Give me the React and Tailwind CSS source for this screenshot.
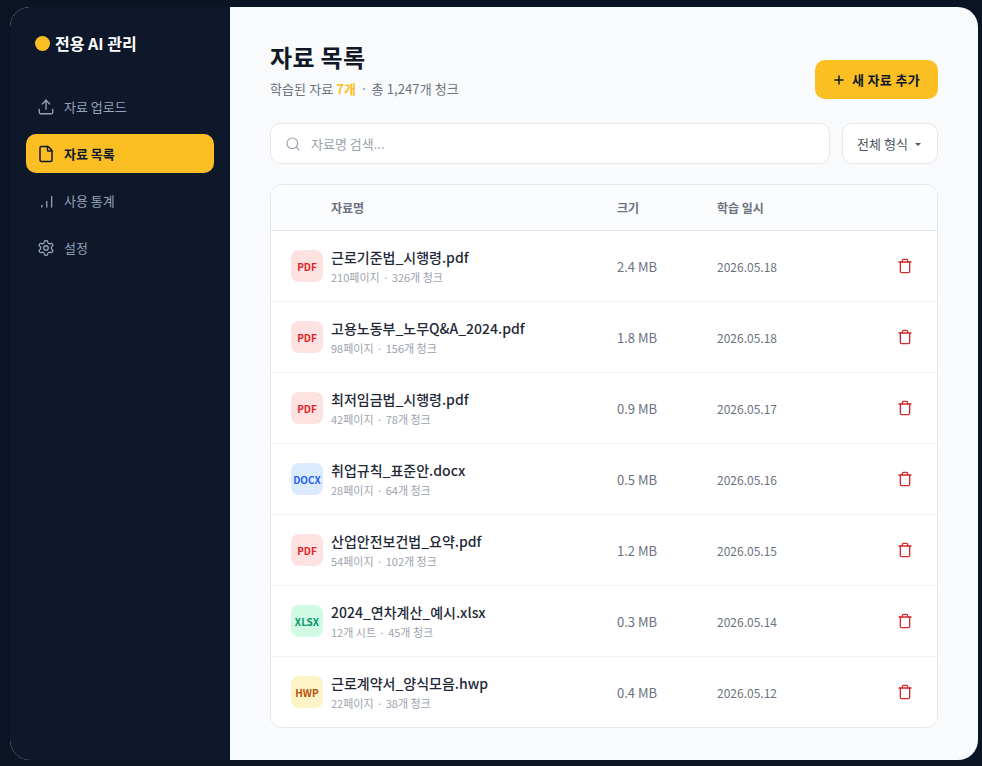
import React from 'react';
import { Upload, File, Settings, Search, Plus } from 'lucide-react';

const FONT = "font-['Noto_Sans_CJK_KR','Noto_Sans',sans-serif]";

const NAV = [
  { label: '자료 업로드', icon: 'upload' },
  { label: '자료 목록', icon: 'file', active: true },
  { label: '사용 통계', icon: 'chart' },
  { label: '설정', icon: 'settings' },
];

const BADGES = {
  PDF: 'bg-[#fee2e2] text-[#dc2626]',
  DOCX: 'bg-[#dbeafe] text-[#2563eb]',
  XLSX: 'bg-[#d1fae5] text-[#059669]',
  HWP: 'bg-[#fef3c7] text-[#b45309]',
};

const FILES = [
  { name: '근로기준법_시행령.pdf', type: 'PDF', info: '210페이지', chunks: '326개 청크', size: '2.4 MB', date: '2026.05.18' },
  { name: '고용노동부_노무Q&A_2024.pdf', type: 'PDF', info: '98페이지', chunks: '156개 청크', size: '1.8 MB', date: '2026.05.18' },
  { name: '최저임금법_시행령.pdf', type: 'PDF', info: '42페이지', chunks: '78개 청크', size: '0.9 MB', date: '2026.05.17' },
  { name: '취업규칙_표준안.docx', type: 'DOCX', info: '28페이지', chunks: '64개 청크', size: '0.5 MB', date: '2026.05.16' },
  { name: '산업안전보건법_요약.pdf', type: 'PDF', info: '54페이지', chunks: '102개 청크', size: '1.2 MB', date: '2026.05.15' },
  { name: '2024_연차계산_예시.xlsx', type: 'XLSX', info: '12개 시트', chunks: '45개 청크', size: '0.3 MB', date: '2026.05.14' },
  { name: '근로계약서_양식모음.hwp', type: 'HWP', info: '22페이지', chunks: '38개 청크', size: '0.4 MB', date: '2026.05.12' },
];

function NavIcon({ name }) {
  if (name === 'upload') return <Upload size={18} strokeWidth={1.75} />;
  if (name === 'file') return <File size={18} strokeWidth={2} />;
  if (name === 'settings') return <Settings size={18} strokeWidth={1.75} />;
  return (
    <svg width="18" height="18" viewBox="0 0 24 24" fill="none" stroke="currentColor" strokeWidth="1.75" strokeLinecap="round">
      <path d="M6.5 20v-2" />
      <path d="M13 20v-7" />
      <path d="M19.5 20V6" />
    </svg>
  );
}

function TrashIcon() {
  return (
    <svg width="16" height="16" viewBox="0 0 24 24" fill="none" stroke="#d12c2c" strokeWidth="2" strokeLinecap="round" strokeLinejoin="round">
      <path d="M3 6h18" />
      <path d="M19 6v14a2 2 0 0 1-2 2H7a2 2 0 0 1-2-2V6" />
      <path d="M8 6V4a2 2 0 0 1 2-2h4a2 2 0 0 1 2 2v2" />
    </svg>
  );
}

function FileRow({ file }) {
  return (
    <div className="flex h-[71px] items-center border-b border-[#f3f4f6] pl-5 pr-6 last:h-[70px] last:border-b-0">
      <div className={`flex h-8 w-8 shrink-0 items-center justify-center rounded-lg text-[10px] font-bold ${BADGES[file.type]}`}>
        {file.type}
      </div>
      <div className="ml-2 w-[286px] min-w-0">
        <div className="text-sm font-medium leading-5 text-[#1f2937]">{file.name}</div>
        <div className="mt-[2px] text-[11px] leading-4 text-[#9ca3af]">
          {file.info} <span className="mx-[0.5px]">·</span> {file.chunks}
        </div>
      </div>
      <div className="w-[100px] pt-[2px] text-[13px] text-[#6b7280]">{file.size}</div>
      <div className="flex-1 pt-[2px] text-xs text-[#6b7280]">{file.date}</div>
      <TrashIcon />
    </div>
  );
}

export default function App() {
  return (
    <div className={`h-[766px] w-[982px] overflow-hidden bg-[#0b1424] pl-[10px] pr-1 pt-[7px] pb-[6px] ${FONT}`}>
      <div className="flex h-[753px] overflow-hidden rounded-[20px] bg-[#f9fafc]">
        <aside className="w-[220px] shrink-0 bg-[#0f172a] px-4 pt-[25px]">
          <div className="flex items-center gap-[5px] pl-[9px]">
            <span className="h-[15px] w-[15px] rounded-full bg-[#fbbf24]" />
            <span className="text-base font-bold leading-[22px] text-white">전용 AI 관리</span>
          </div>
          <nav className="mt-[33px] flex flex-col gap-2">
            {NAV.map((item) => (
              <div
                key={item.label}
                className={`flex h-[39px] items-center gap-[9px] rounded-[10px] px-[11px] text-[13px] ${
                  item.active ? 'bg-[#fbbf24] font-semibold text-[#0f172a]' : 'font-normal text-[#94a3b8]'
                }`}
              >
                <NavIcon name={item.icon} />
                {item.label}
              </div>
            ))}
          </nav>
        </aside>

        <main className="flex-1 px-10 pt-[32px]">
          <div className="flex items-start justify-between">
            <div>
              <h1 className="text-2xl font-bold leading-9 tracking-[0.3px] text-[#111827]">자료 목록</h1>
              <p className="mt-[4px] text-[13px] leading-5 tracking-[0.1px] text-[#6b7280]">
                학습된 자료 <span className="font-bold text-[#fbbf24]">7개</span> <span className="mx-px">·</span> 총 1,247개 청크
              </p>
            </div>
            <button className="mt-[21px] flex h-[39px] w-[123px] items-center justify-center gap-[6px] rounded-[10px] bg-[#fbbf24] pr-px text-[13px] font-semibold tracking-[0.3px] text-[#0f172a]">
              <Plus size={14} strokeWidth={2.5} />
              새 자료 추가
            </button>
          </div>

          <div className="mt-6 flex gap-3">
            <div className="flex h-[41px] flex-1 items-center gap-[10px] rounded-[10px] border border-[#e5e7eb] bg-white px-[14px]">
              <Search size={16} strokeWidth={1.75} className="text-[#9ca3af]" />
              <span className="text-[13px] text-[#9ca3af]">자료명 검색...</span>
            </div>
            <div className="flex h-[41px] w-[96px] items-center justify-center gap-[7px] rounded-[10px] border border-[#e5e7eb] bg-white pr-[2px] text-[13px] text-[#4b5563]">
              전체 형식
              <span className="mt-px h-0 w-0 border-x-[3px] border-t-[3px] border-x-transparent border-t-[#4b5563]" />
            </div>
          </div>

          <div className="mt-5 overflow-hidden rounded-xl border border-[#e5e7eb] bg-white">
            <div className="flex h-[46px] items-center border-b border-[#e5e7eb] bg-[#fbfcfd] pl-[60px] text-xs font-semibold text-[#6b7280]">
              <div className="w-[286px]">자료명</div>
              <div className="w-[100px]">크기</div>
              <div>학습 일시</div>
            </div>
            {FILES.map((file) => (
              <FileRow key={file.name} file={file} />
            ))}
          </div>
        </main>
      </div>
    </div>
  );
}
